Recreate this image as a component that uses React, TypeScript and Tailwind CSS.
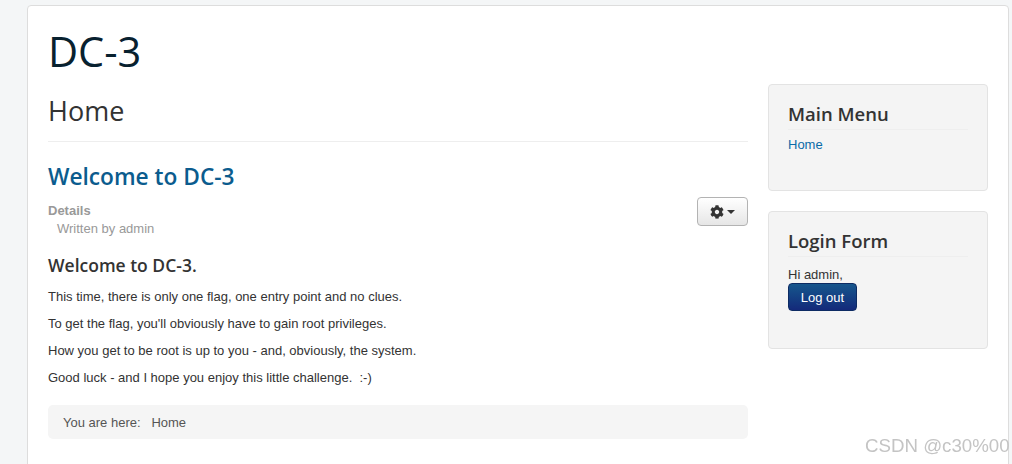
import { FaCog } from 'react-icons/fa';

const heading = "font-['Open_Sans',sans-serif]";

function Module({ title, children, className }: { title: string; children: React.ReactNode; className: string }) {
  return (
    <div className={`bg-[#f4f4f4] border border-[#e3e3e3] rounded-[4px] px-[19px] pt-[18px] ${className}`}>
      <h3 className={`${heading} text-[18.5px] leading-[21px] font-semibold text-[#333] pb-[5px] border-b border-[#eeeeee]`}>{title}</h3>
      {children}
    </div>
  );
}

export default function App() {
  return (
    <div className="h-[464px] overflow-hidden bg-[#f4f6f7] pl-[27px] pr-[3px] pt-[5px] font-['Liberation_Sans',Arial,sans-serif] text-[13px] leading-[18px] text-[#333]">
      <div className="relative h-[480px] bg-white border border-[#dddddd] rounded-[4px] px-[20px] pt-[20px]">
        <h1 className={`${heading} text-[41.5px] leading-[50px] text-[#08212f]`}>DC-3</h1>
        <div className="flex gap-[20px] mt-[8px]">
          <main className="w-[700px]">
            <h2 className={`${heading} text-[27px] leading-[40px] text-[#333] pt-[7px] pb-[10px] border-b border-[#eeeeee]`}>Home</h2>
            <h2 className={`${heading} text-[22.7px] leading-[30px] font-semibold text-[#0b5c8e] mt-[20px]`}>Welcome to DC-3</h2>
            <div className="relative mt-[10px] text-[#999]">
              <div className="font-bold">Details</div>
              <div className="pl-[9px]">Written by admin</div>
              <button className="absolute right-0 top-[-5px] w-[51px] h-[29px] flex items-center justify-center gap-[3px] rounded-[4px] border border-[#b3b3b3] bg-gradient-to-b from-white to-[#e6e6e6] text-[#333]">
                <FaCog size={14} />
                <span className="w-0 h-0 border-x-[4px] border-x-transparent border-t-[4px] border-t-[#333]" />
              </button>
            </div>
            <h3 className={`${heading} text-[17.5px] leading-[24px] font-semibold text-[#333] mt-[15px]`}>Welcome to DC-3.</h3>
            <div className="mt-[11px] flex flex-col gap-[9px]">
              <p>This time, there is only one flag, one entry point and no clues.</p>
              <p>To get the flag, you'll obviously have to gain root privileges.</p>
              <p>How you get to be root is up to you - and, obviously, the system.</p>
              <p className="whitespace-pre">Good luck - and I hope you enjoy this little challenge.  :-)</p>
            </div>
            <div className="mt-[18px] h-[34px] bg-[#f5f5f5] rounded-[5px] pl-[15px] pt-[1px] flex items-center text-[#555] whitespace-pre">
              You are here:   <span>Home</span>
            </div>
          </main>
          <aside className="w-[220px] flex flex-col gap-[20px]">
            <Module title="Main Menu" className="h-[107px]">
              <a className="block mt-[6px] text-[#0a6ba8]">Home</a>
            </Module>
            <Module title="Login Form" className="h-[138px]">
              <div className="mt-[9px] leading-[17px]">Hi admin,</div>
              <button className="block w-[69px] h-[28px] pt-[1px] rounded-[4px] border border-[#0d2b63] bg-gradient-to-b from-[#17568c] to-[#14297a] text-white text-[13px]">Log out</button>
            </Module>
          </aside>
        </div>
      </div>
      <div className="absolute left-[865px] top-[435px] text-[18.7px] leading-[21px] text-[#c4c4c4] blur-[0.4px]">CSDN @c30%00</div>
    </div>
  );
}
